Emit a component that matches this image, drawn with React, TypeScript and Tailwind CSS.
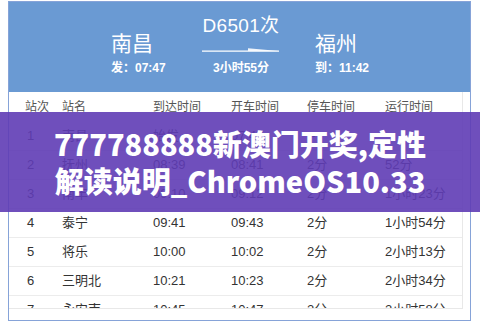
import React from "react";

const rows = [
  ["1", "南昌", "始发", "07:47", "--", "--"],
  ["2", "抚州", "08:39", "08:41", "2分", "52分"],
  ["3", "南丰", "09:10", "09:12", "2分", "1小时23分"],
  ["4", "泰宁", "09:41", "09:43", "2分", "1小时54分"],
  ["5", "将乐", "10:00", "10:02", "2分", "2小时13分"],
  ["6", "三明北", "10:21", "10:23", "2分", "2小时34分"],
  ["7", "永安南", "10:45", "10:47", "2分", "2小时58分"],
];

const cols = "grid grid-cols-[37px_91px_78px_76px_78px_1fr] items-center pl-[16px]";

export default function App() {
  return (
    <div
      className="relative w-[480px] h-[327px] overflow-hidden bg-white"
      style={{ fontFamily: '"Liberation Sans", "Noto Sans CJK SC", sans-serif' }}
    >
      <div className="ml-[8px] mt-[1px] w-[463px] h-[320px] border-[1.5px] border-[#86a3d8] overflow-hidden">
        {/* header */}
        <div className="h-[90px] bg-[#6a9ad3] text-white flex pl-[102px]">
          <div className="w-[91px] flex flex-col pt-[29px]">
            <div className="text-[21px] leading-[26px]">南昌</div>
            <div className="mt-[3px] text-[12px] leading-[16px] font-bold">发：07:47</div>
          </div>
          <div className="w-[78px] flex flex-col items-center pt-[12px]">
            <div className="text-[19px] leading-[24px] tracking-[0.3px]">D6501次</div>
            <svg width="78" height="6" viewBox="0 0 78 6" className="mt-[9px]">
              <path d="M0 4.2 H77" stroke="white" strokeWidth="1.3" />
              <path d="M46 1.2 L77 4 L46 4 Z" fill="white" opacity="0.9" />
            </svg>
            <div className="mt-[7px] text-[12px] leading-[16px] font-bold">3小时55分</div>
          </div>
          <div className="ml-[35px] flex flex-col pt-[29px]">
            <div className="text-[21px] leading-[26px]">福州</div>
            <div className="mt-[3px] text-[12px] leading-[16px] font-bold">到：11:42</div>
          </div>
        </div>

        {/* table */}
        <div className="h-[217px] overflow-hidden mr-[7px] border-r border-b border-[#e8e8e8]">
          <div className={cols + " h-[30px] text-[12px] text-[#555]"}>
            <span>站次</span>
            <span>站名</span>
            <span>到达时间</span>
            <span>开车时间</span>
            <span>停车时间</span>
            <span>运行时间</span>
          </div>
          {rows.map((r) => (
            <div
              key={r[0]}
              className={cols + " h-[29px] text-[13px] text-[#333] border-b border-[#ececec]"}
            >
              <span className="pl-[2px]">{r[0]}</span>
              <span>{r[1]}</span>
              <span>{r[2]}</span>
              <span>{r[3]}</span>
              <span>{r[4]}</span>
              <span>{r[5]}</span>
            </div>
          ))}
        </div>
      </div>

      {/* title banner */}
      <div
        className="absolute left-0 top-[112px] w-[480px] h-[100px] bg-[#5f3cb5]/90 flex flex-col items-center justify-center text-white font-black text-[29px] leading-[37px]"
        style={{ fontFamily: '"Noto Sans CJK SC", "Noto Sans", sans-serif' }}
      >
        <div>777788888新澳门开奖,定性</div>
        <div>解读说明_ChromeOS10.33</div>
      </div>
    </div>
  );
}
